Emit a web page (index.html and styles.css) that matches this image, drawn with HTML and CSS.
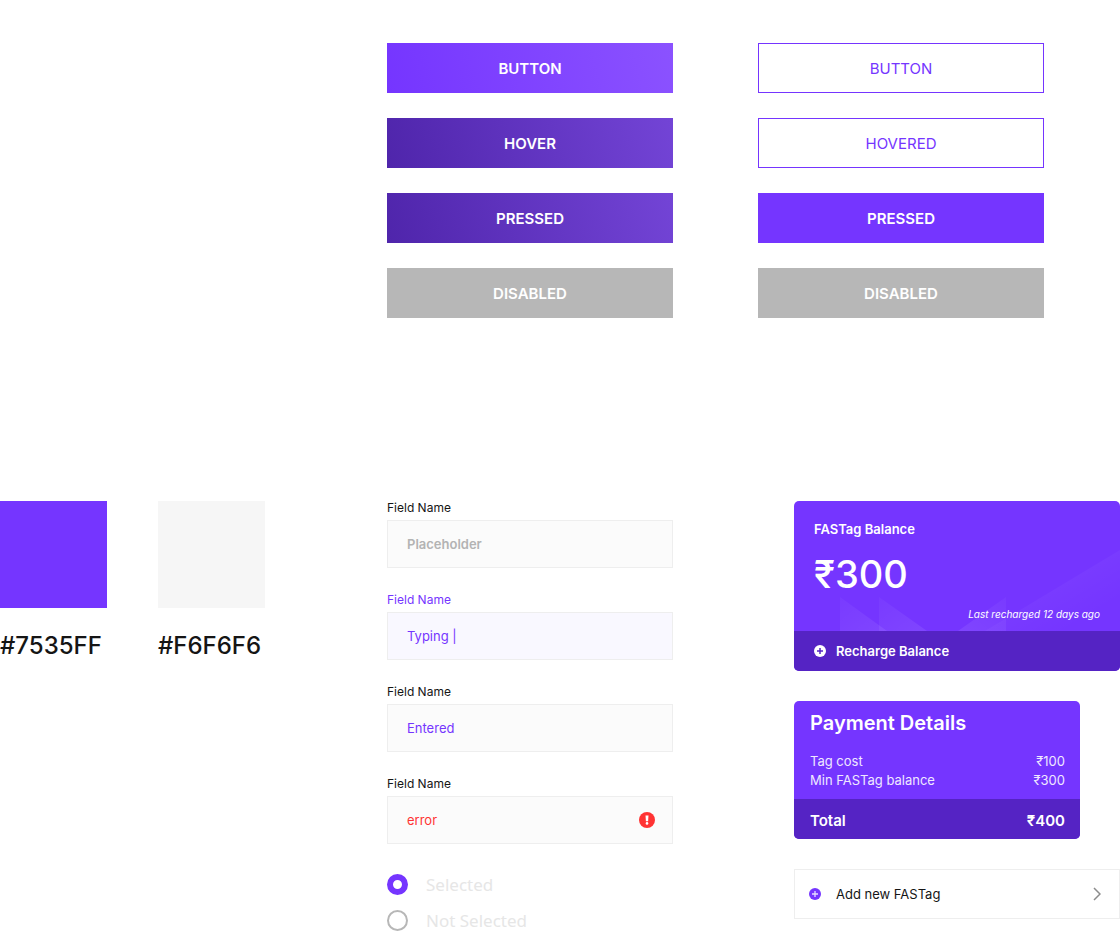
FILE: index.html
```html
<!DOCTYPE html>
<html lang="en">
<head>
<meta charset="utf-8">
<meta name="viewport" content="width=device-width, initial-scale=1">
<title>FASTag UI components</title>
<link rel="stylesheet" href="styles.css">
</head>
<body>
<main>
  <section class="buttons" aria-label="Buttons">
    <button class="btn btn-primary" type="button">BUTTON</button>
    <button class="btn btn-outline" type="button">BUTTON</button>
    <button class="btn btn-deep" type="button">HOVER</button>
    <button class="btn btn-outline" type="button">HOVERED</button>
    <button class="btn btn-deep" type="button">PRESSED</button>
    <button class="btn btn-solid" type="button">PRESSED</button>
    <button class="btn" type="button" disabled>DISABLED</button>
    <button class="btn" type="button" disabled>DISABLED</button>
  </section>

  <div class="columns">
    <section class="swatches" aria-label="Colours">
      <div class="swatch"><div class="chip chip-violet"></div><span>#7535FF</span></div>
      <div class="swatch"><div class="chip chip-grey"></div><span>#F6F6F6</span></div>
    </section>

    <form class="form">
      <div class="field">
        <label for="f1">Field Name</label>
        <input id="f1" type="text" placeholder="Placeholder">
      </div>
      <div class="field field-active">
        <label for="f2">Field Name</label>
        <input id="f2" type="text" value="Typing |">
      </div>
      <div class="field">
        <label for="f3">Field Name</label>
        <input id="f3" type="text" value="Entered">
      </div>
      <div class="field field-error">
        <label for="f4">Field Name</label>
        <div class="input-wrap">
          <input id="f4" type="text" value="error" aria-invalid="true">
          <svg class="alert" viewBox="0 0 16 16" aria-hidden="true"><circle cx="8" cy="8" r="8" fill="#ff3333"/><path d="M6.5 3.5h3L9.1 9.2H6.9z" fill="#fff"/><circle cx="8" cy="11.4" r="1.3" fill="#fff"/></svg>
        </div>
      </div>
      <div class="radios">
        <label class="radio"><input type="radio" name="choice" checked><span>Selected</span></label>
        <label class="radio"><input type="radio" name="choice"><span>Not Selected</span></label>
      </div>
    </form>

    <section class="cards">
      <article class="card balance">
        <svg class="pattern" viewBox="0 0 326 130" aria-hidden="true">
          <defs>
            <linearGradient id="fade-left" x1="0" y1="0" x2="1" y2="1"><stop offset="0" stop-color="#fff" stop-opacity=".03"/><stop offset="1" stop-color="#fff" stop-opacity=".08"/></linearGradient>
            <linearGradient id="fade-right" x1="1" y1="0" x2="0" y2="1"><stop offset="0" stop-color="#fff" stop-opacity=".03"/><stop offset="1" stop-color="#fff" stop-opacity=".08"/></linearGradient>
            <linearGradient id="fade-far" x1="0" y1="0" x2="1" y2="1"><stop offset=".3" stop-color="#fff" stop-opacity=".05"/><stop offset=".8" stop-color="#fff" stop-opacity="0"/></linearGradient>
          </defs>
          <path d="M46 96V130H93Z" fill="url(#fade-left)"/>
          <path d="M85 96V130H133Z" fill="url(#fade-left)"/>
          <path d="M212 96V130H164Z" fill="url(#fade-right)"/>
          <path d="M326 49V130H191Z" fill="url(#fade-far)"/>
        </svg>
        <div class="balance-body">
          <h2>FASTag Balance</h2>
          <p class="amount">₹300</p>
          <p class="note">Last recharged 12 days ago</p>
        </div>
        <button class="card-foot recharge" type="button">
          <svg class="plus" viewBox="0 0 12 12" aria-hidden="true"><circle cx="6" cy="6" r="6" fill="#fff"/><path d="M6 3v6M3 6h6" stroke="#5523c4" stroke-width="1.5"/></svg>
          Recharge Balance
        </button>
      </article>

      <article class="card payment">
        <div class="payment-body">
          <h2>Payment Details</h2>
          <dl>
            <div><dt>Tag cost</dt><dd>₹100</dd></div>
            <div><dt>Min FASTag balance</dt><dd>₹300</dd></div>
          </dl>
        </div>
        <div class="card-foot total"><span>Total</span><span>₹400</span></div>
      </article>

      <button class="add" type="button">
        <svg class="plus" viewBox="0 0 12 12" aria-hidden="true"><circle cx="6" cy="6" r="6" fill="#7535ff"/><path d="M6 3v6M3 6h6" stroke="#e6dcff" stroke-width="1.3"/></svg>
        <span>Add new FASTag</span>
        <svg class="chevron" viewBox="0 0 8 14" aria-hidden="true"><path d="M1 1l6 6-6 6" fill="none" stroke="#8c8c8c" stroke-width="1.5"/></svg>
      </button>
    </section>
  </div>
</main>
</body>
</html>
```
FILE: styles.css
```css
* { box-sizing: border-box; }

body {
  margin: 0;
  background: #fff;
  color: #151515;
  font-family: Inter, "Liberation Sans", sans-serif;
}

h2, p, dl, dd { margin: 0; }

button, input { font-family: inherit; }

.buttons {
  display: grid;
  grid-template-columns: 387fr 286fr 85fr 286fr 76fr;
  row-gap: 25px;
  padding-top: 43px;
}

.btn {
  grid-column: 2;
  height: 50px;
  padding: 0;
  border: 0;
  border-radius: 0;
  color: #fff;
  font-size: 15px;
  font-weight: 600;
}

.btn:nth-child(even) { grid-column: 4; }
.btn:disabled { background: #b7b7b7; }
.btn-primary { background: linear-gradient(75deg, #7535ff, #8b52ff); }
.btn-deep { background: linear-gradient(75deg, #4f25ab, #7344d6); }
.btn-solid { background: #7535ff; }

.btn-outline {
  border: 1px solid #7535ff;
  background: #fff;
  color: #7535ff;
  font-weight: 400;
}

.columns {
  display: grid;
  grid-template-columns: 387fr 286fr 121fr 326fr;
  padding-top: 183px;
}

.swatches { display: flex; gap: 51px; align-items: flex-start; }

.swatch {
  width: 107px;
  font-size: 24px;
  font-weight: 500;
  line-height: 30px;
}

.swatch span { display: block; padding-top: 23px; }
.chip { height: 107px; }
.chip-violet { background: #7535ff; }
.chip-grey { background: #f6f6f6; }

.form { display: flex; flex-direction: column; gap: 25px; }

.field { display: flex; flex-direction: column; gap: 5px; }
.field label { font-size: 12px; line-height: 14px; }
.field-active label { color: #7535ff; }

.field input {
  width: 100%;
  height: 48px;
  padding: 0 19px;
  border: 1px solid #eee;
  border-radius: 0;
  background: #fbfbfb;
  color: #7535ff;
  font-size: 13px;
  outline: 0;
}

.field input::placeholder { color: #b3b3b3; font-weight: 600; opacity: 1; }
.field-active input { background: #f9f8ff; }
.field-error input { color: #ff3333; }

.input-wrap { position: relative; display: flex; }

.alert {
  position: absolute;
  top: 16px;
  right: 18px;
  width: 16px;
  height: 16px;
}

.radios { display: flex; flex-direction: column; gap: 15px; padding-top: 5px; }

.radio {
  display: flex;
  align-items: center;
  gap: 18px;
  height: 21px;
  color: #e6e6e6;
  font: 17px/21px "Noto Sans", sans-serif;
}

.radio input {
  appearance: none;
  flex: none;
  width: 21px;
  height: 21px;
  margin: 0;
  border: 2px solid #b7b7b7;
  border-radius: 50%;
  background: #fff;
}

.radio input:checked { border: 6px solid #7535ff; }

.cards {
  grid-column: 4;
  display: flex;
  flex-direction: column;
  gap: 30px;
}

.card {
  position: relative;
  overflow: hidden;
  border-radius: 5px;
  background: #7535ff;
  color: #fff;
}

.pattern { position: absolute; top: 0; left: 0; width: 100%; }

.balance-body {
  position: relative;
  display: flex;
  flex-direction: column;
  height: 130px;
  padding: 20px 20px 8px;
}

.balance h2 { font-size: 13px; font-weight: 600; line-height: 16px; }
.amount { padding-top: 13px; font-size: 38px; font-weight: 500; line-height: 48px; }

.note {
  margin-top: auto;
  align-self: flex-end;
  font-size: 10px;
  font-style: italic;
  line-height: 18px;
}

.card-foot {
  display: flex;
  align-items: center;
  width: 100%;
  height: 40px;
  border: 0;
  background: #5523c4;
  color: #fff;
  font-weight: 600;
}

.recharge { position: relative; gap: 10px; padding: 0 20px; font-size: 13px; }
.plus { flex: none; width: 12px; height: 12px; }

.payment { margin-right: 40px; }
.payment-body { padding: 8px 15px 9px 16px; }
.payment h2 { font-size: 20px; font-weight: 600; line-height: 28px; }
.payment dl { padding-top: 15px; font-size: 13px; line-height: 19px; color: #efe8ff; }
.payment dl div { display: flex; justify-content: space-between; }
.total { justify-content: space-between; padding: 2px 15px 0 16px; font-size: 15px; }

.add {
  display: flex;
  align-items: center;
  gap: 15px;
  height: 50px;
  padding: 0 18px 0 14px;
  border: 1px solid #eee;
  background: #fff;
  color: #151515;
  font-size: 13px;
}

.chevron { width: 8px; height: 14px; margin-left: auto; }
```
